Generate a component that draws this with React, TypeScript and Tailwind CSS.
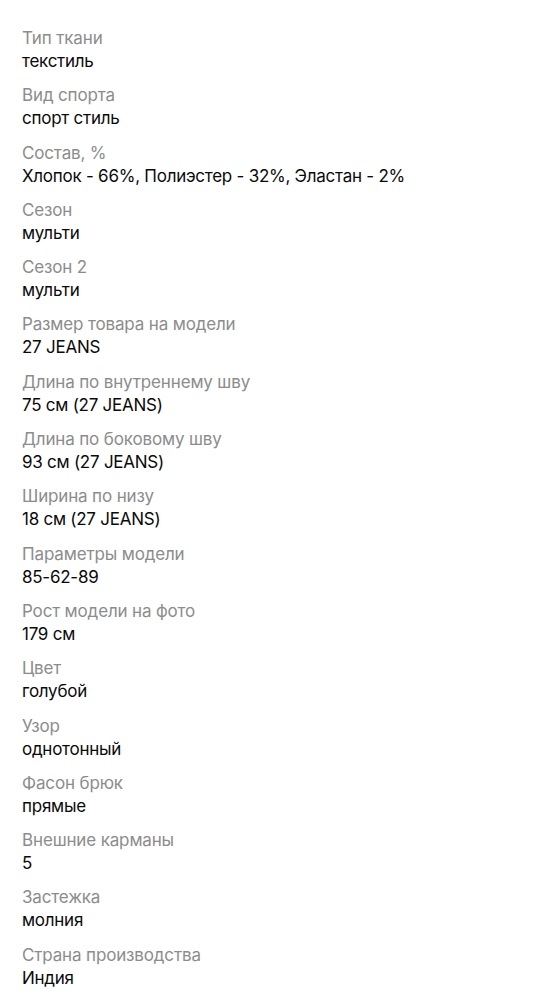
const items: [string, string][] = [
  ["Тип ткани", "текстиль"],
  ["Вид спорта", "спорт стиль"],
  ["Состав, %", "Хлопок - 66%, Полиэстер - 32%, Эластан - 2%"],
  ["Сезон", "мульти"],
  ["Сезон 2", "мульти"],
  ["Размер товара на модели", "27 JEANS"],
  ["Длина по внутреннему шву", "75 см (27 JEANS)"],
  ["Длина по боковому шву", "93 см (27 JEANS)"],
  ["Ширина по низу", "18 см (27 JEANS)"],
  ["Параметры модели", "85-62-89"],
  ["Рост модели на фото", "179 см"],
  ["Цвет", "голубой"],
  ["Узор", "однотонный"],
  ["Фасон брюк", "прямые"],
  ["Внешние карманы", "5"],
  ["Застежка", "молния"],
  ["Страна производства", "Индия"],
];

export default function App() {
  return (
    <div
      className="w-[541px] h-[999px] overflow-hidden bg-white pl-[22px] pt-[27px] flex flex-col gap-[11.3px]"
      style={{ fontFamily: "Inter, 'Noto Sans', sans-serif" }}
    >
      {items.map(([label, value]) => (
        <div key={label} className="flex flex-col">
          <div className="text-[17px] leading-[23px] tracking-[-0.15px] text-[#8c8c8c]">{label}</div>
          <div className="text-[17px] leading-[23px] tracking-[-0.25px] text-[#0a0a0a]">{value}</div>
        </div>
      ))}
    </div>
  );
}
